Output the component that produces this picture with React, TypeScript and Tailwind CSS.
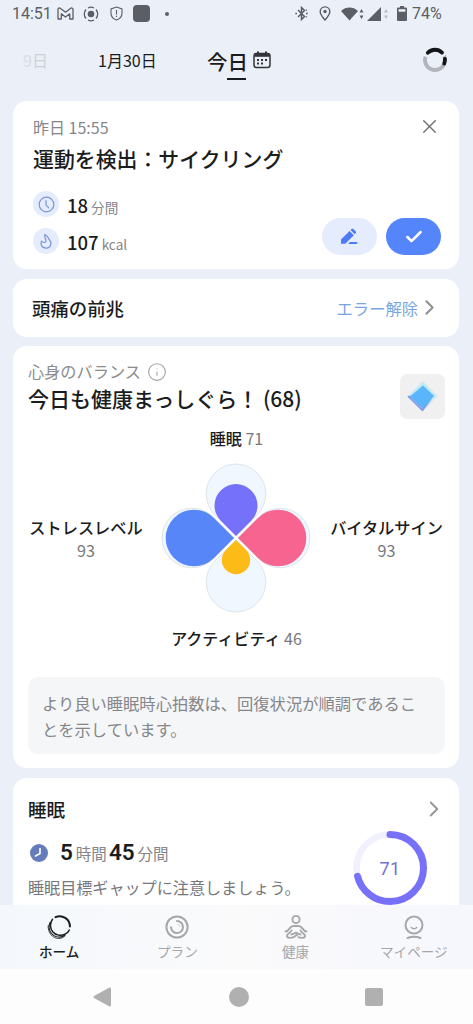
import type { ReactNode } from 'react';
import { Check, ChevronRight, Info, X } from 'lucide-react';

interface PetalProps {
    angle: number;
    radius: number;
    fill: string;
    stroke?: string;
}

interface NavItem {
    id: string;
    label: string;
    icon: ReactNode;
}

const petals: PetalProps[] = [
    { angle: 0, radius: 21.5, fill: '#7671fb' },
    { angle: 90, radius: 28.3, fill: '#f6648f' },
    { angle: 180, radius: 14.2, fill: '#fdbb17' },
    { angle: 270, radius: 28.3, fill: '#5786f9' },
];

function Petal({ angle, radius, fill, stroke }: PetalProps) {
    const a = radius * Math.SQRT1_2;
    return (
        <path
            d={`M0 -2 L${a} ${-a - 2} A${radius} ${radius} 0 1 0 ${-a} ${-a - 2} Z`}
            transform={`rotate(${angle})`}
            fill={fill}
            stroke={stroke}
        />
    );
}

function StatusBar() {
    return (
        <div className="flex h-[27px] shrink-0 items-center justify-between pl-3 pr-[30px] font-['Roboto'] text-[16px] text-[#5c5e66]">
            <div className="flex items-center">
                <span className="w-[41px]">14:51</span>
                <svg width="17" height="13" viewBox="0 0 17 13" className="ml-1" fill="none" stroke="currentColor" strokeWidth="1.3" strokeLinejoin="round">
                    <path d="M1 12V2.4C1 1 2.5.5 3.6 1.4L8.5 5.2l4.9-3.8C14.5.5 16 1 16 2.4V12h-3.3V6.8L8.5 10 4.3 6.8V12Z" />
                </svg>
                <svg width="16" height="16" viewBox="0 0 16 16" className="ml-[9px]" fill="none" stroke="currentColor" strokeWidth="1.3">
                    <circle cx="8" cy="8" r="3.3" fill="currentColor" stroke="none" />
                    <path d="M5 2a6.5 6.5 0 0 1 6 0M5 14a6.5 6.5 0 0 0 6 0M3 3.5a6.8 6.8 0 0 0 0 9M13 3.5a6.8 6.8 0 0 1 0 9" />
                </svg>
                <svg width="13" height="15" viewBox="0 0 13 15" className="ml-[11px]" fill="none" stroke="currentColor" strokeWidth="1.1">
                    <path d="M6.5 1 12 3v4.2c0 3.3-2.3 5.7-5.5 6.8C3.3 12.9 1 10.5 1 7.2V3ZM6.5 4v4.5M6.5 9.7v1.3" />
                </svg>
                <div className="ml-[10px] h-[17px] w-[17px] rounded-[4px] bg-[#5c5e66]" />
                <div className="ml-[15px] h-1 w-1 rounded-full bg-[#5c5e66]" />
            </div>
            <div className="flex items-center">
                <svg width="13" height="15" viewBox="0 0 13 15" fill="none" stroke="currentColor" strokeWidth="1.5">
                    <path d="m3 4 6.5 6.5-3 3v-12l3 3L3 11" />
                    <path d="M.3 7.5H2M11 7.5h1.7M11 4.5l.7-.7M11 10.5l.7.7" />
                </svg>
                <svg width="12" height="15" viewBox="0 0 12 15" className="ml-[11px]" fill="none" stroke="currentColor" strokeWidth="1.4">
                    <path d="M6 14C3 10.500 1.200 8 1.200 5.700a4.800 4.800 0 0 1 9.600 0C10.800 8 9 10.500 6 14Z" />
                    <circle cx="6" cy="5.500" r="1.700" fill="currentColor" stroke="none" />
                </svg>
                <svg width="23" height="14" viewBox="0 0 23 14" className="ml-[10px]" fill="currentColor">
                    <path d="M0 4C5-.6 12-.6 17 4L8.5 13.5ZM18.5 5.5 20.5 2l2 3.500ZM18.5 8.5l2 3.5 2-3.5Z" />
                </svg>
                <svg width="22" height="14" viewBox="0 0 22 14" className="ml-[3px]" fill="currentColor">
                    <path d="M0 14 14 0v14Z" />
                    <path d="m17 5.500 2-3.500 2 3.500ZM17 8.500l2 3.500 2-3.500Z" opacity=".35" />
                </svg>
                <svg width="10" height="15" viewBox="0 0 10 15" className="ml-2" fill="currentColor">
                    <path d="M3 0h4v1.500h2a1 1 0 0 1 1 1V14a1 1 0 0 1-1 1H1a1 1 0 0 1-1-1V2.500a1 1 0 0 1 1-1h2Z" />
                    <path d="M1.600 3.200h6.800v2.500H1.600Z" fill="#edf1f9" />
                </svg>
                <span className="ml-[5px] w-[31px]">74%</span>
            </div>
        </div>
    );
}

function DateHeader() {
    return (
        <header className="flex h-[74px] shrink-0 items-start pt-5 text-[#1b1c20]">
            <div className="flex w-[98px] pl-[23px] pt-[1px] text-[16px] leading-6 text-[#cdd0d8]">
                <span className="opacity-60">9</span>日
            </div>
            <span className="w-[109px] pt-[1px] text-[16px] leading-6">1月30日</span>
            <div className="flex flex-col items-center">
                <span className="text-[20.5px] font-medium leading-7">今日</span>
                <div className="mt-[3px] ml-[18px] h-[2px] w-[19px] bg-[#1b1c20]" />
            </div>
            <svg width="18" height="18" viewBox="0 0 18 18" className="ml-[5px] mt-1" fill="none" stroke="#333438" strokeWidth="1.5">
                <rect x="1" y="2.500" width="16" height="14" rx="2.500" />
                <path d="M1.500 4.300h15" strokeWidth="3" />
                <path d="M5 .5v3M13 .5v3" strokeWidth="2" />
                <path d="M4 9h2M8 9h2M12 9h2M4 12.500h2M8 12.500h2" strokeWidth="1.900" />
            </svg>
            <svg width="26" height="26" viewBox="0 0 26 26" className="ml-auto mr-[25px]" fill="none" strokeWidth="3.8" strokeLinecap="round">
                <circle cx="13" cy="13" r="10" stroke="#b2b5bb" />
                <path d="M4.500 7.500a10 10 0 0 1 16.500-.500" stroke="#edf1f9" strokeWidth="5" />
                <path d="M5.800 5.800a10 10 0 0 1 14.200-.200M22.900 11.800a10 10 0 0 1-.700 4.800" stroke="#141518" />
            </svg>
        </header>
    );
}

function WorkoutCard() {
    return (
        <section className="flex h-[168px] shrink-0 justify-between rounded-[14px] bg-white pl-5 pr-[18px] pt-3.5">
            <div>
                <p className="text-[16px] leading-6 text-[#85868a]">昨日 15:55</p>
                <h2 className="mt-[3px] text-[20.9px] font-medium leading-8 text-[#1b1c1e]">運動を検出：サイクリング</h2>
                <div className="mt-[17px] flex h-[26px] items-center">
                    <div className="flex h-[26px] w-[26px] items-center justify-center rounded-full bg-[#e4ecfd]">
                        <svg width="17" height="17" viewBox="0 0 17 17" fill="none" stroke="#7a96d8" strokeWidth="1.2" strokeLinecap="round">
                            <circle cx="8.5" cy="8.5" r="7.3" />
                            <path d="M8 4.5v4.3l2.7 3" />
                        </svg>
                    </div>
                    <p className="ml-2 pt-[3px] text-[#1b1c1e]">
                        <span className="text-[18.5px] font-medium">18</span>
                        <span className="ml-[3px] text-[13.6px] text-[#85868a]">分間</span>
                    </p>
                </div>
                <div className="mt-[11px] flex h-[26px] items-center">
                    <div className="flex h-[26px] w-[26px] items-center justify-center rounded-full bg-[#e4ecfd]">
                        <svg width="14" height="16" viewBox="0 0 14 16" fill="none" stroke="#7a96d8" strokeWidth="1.2" strokeLinejoin="round">
                            <path d="M5.800 1.500c3 1.300 3.300 3.600 4.400 5 1.300 1.500 2 2.700 1.700 4.300a5 5 0 0 1-9.900-.1c0-1.100.2-2 .7-2.700.7 1.100 1.500 1.600 2.500 1.500 1.500-.2 2.100-1.600 1.500-3.200-.6-1.700-1.600-2.500-.9-4.800Z" />
                        </svg>
                    </div>
                    <p className="ml-2 pt-[3px] text-[#1b1c1e]">
                        <span className="text-[18.5px] font-medium">107</span>
                        <span className="ml-[3px] text-[13.6px] text-[#85868a]">kcal</span>
                    </p>
                </div>
            </div>
            <div className="flex flex-col items-end justify-between pb-[14px]">
                <X size={23} strokeWidth={1.5} className="text-[#717276]" />
                <div className="flex gap-[9.5px]">
                    <button className="flex h-[37px] w-[55px] items-center justify-center rounded-full bg-[#e5ecfd]">
                        <svg width="18" height="17" viewBox="0 0 18 17" fill="#4d7bf3">
                            <path d="M1 15.800V11.500L9.600 3l4.200 4.200-8.500 8.600ZM10.500 2.100l1-1c.6-.6 1.300-.6 1.900 0l2.200 2.200c.6.600.6 1.300 0 1.900l-.9 1ZM10 14h6.500c1.300 0 1.300 1.900 0 1.900H8.200Z" />
                        </svg>
                    </button>
                    <button className="flex h-[37px] w-[55px] items-center justify-center rounded-full bg-[#5585fb] text-white">
                        <Check size={20} strokeWidth={3} />
                    </button>
                </div>
            </div>
        </section>
    );
}

function BalanceCard() {
    return (
        <section className="h-[422px] shrink-0 rounded-[14px] bg-white pl-[15px] pr-3.5 pt-[13px]">
            <div className="flex justify-between">
                <div>
                    <div className="flex items-center text-[16.2px] leading-6 text-[#8b8c90]">
                        心身のバランス
                        <Info size={20} strokeWidth={1.3} className="ml-1.5 mt-[1px] text-[#a0a1a4]" />
                    </div>
                    <h2 className="text-[21px] font-medium leading-[30px] text-[#1b1c1e]">今日も健康まっしぐら！ (68)</h2>
                </div>
                <div className="mt-[15px] flex h-[45px] w-[45px] items-center justify-center rounded-[7px] bg-[#f0f0f1]">
                    <svg width="33" height="33" viewBox="0 0 33 33">
                        <path d="M16.500 1.500c.8 0 1.300.4 1.800 1l12.200 12.200c.8.800.8 1.800 0 2.600L17 31 1.500 16.500 14.800 2.400c.5-.6 1-.9 1.700-.9Z" fill="#d8e8ef" />
                        <path d="m17 3 12.500 12.500L17 30 3 16Z" fill="#b5ecfb" />
                        <path d="M1.200 16.500 4 15.500 17 27l9-8-9.500 12.500Z" fill="#7f9be6" />
                        <path d="m17 5.500 11 10.500L17 28.500 4 16.500Z" fill="#5bb5fb" />
                        <path d="m4 17.500 12.500 11.300" stroke="#a9bdf5" strokeWidth=".8" />
                    </svg>
                </div>
            </div>

            <p className="mt-[7px] text-center text-[16px] leading-6 text-[#77787c]">
                <span className="font-medium text-[#1b1c1e]">睡眠</span> 71
            </p>
            <div className="mt-3 flex items-center justify-between text-center text-[16.2px] leading-[23px] text-[#77787c]">
                <p className="w-[116px] pt-[1px]">
                    <span className="whitespace-nowrap font-medium text-[#1b1c1e]">ストレスレベル</span>
                    <br />
                    93
                </p>
                <svg width="152" height="152" viewBox="-76 -76 152 152">
                    {petals.map((petal) => (
                        <Petal key={petal.angle} angle={petal.angle} radius={29.8} fill="#f0f7fe" stroke="#dde4ea" />
                    ))}
                    <path d="m-30-30 60 60M30-30l-60 60" stroke="#fff" strokeWidth="2" />
                    {petals.map((petal) => (
                        <Petal key={petal.angle} {...petal} />
                    ))}
                </svg>
                <p className="w-[117px] pt-[1px]">
                    <span className="whitespace-nowrap font-medium text-[#1b1c1e]">バイタルサイン</span>
                    <br />
                    93
                </p>
            </div>
            <p className="mt-[12px] text-center text-[16px] leading-6 text-[#77787c]">
                <span className="font-medium text-[#1b1c1e]">アクティビティ</span> 46
            </p>
            <div className="mt-[27px] h-[77px] rounded-[10px] bg-[#f5f6f8] py-3.5 pl-3.5 text-[16.3px] leading-[25.5px] text-[#85868a]">
                より良い睡眠時心拍数は、回復状況が順調であるこ
                <br />
                とを示しています。
            </div>
        </section>
    );
}

function SleepCard() {
    return (
        <section className="h-[160px] shrink-0 rounded-t-[14px] bg-white pl-[15px] pr-3 pt-[17px]">
            <div className="flex items-center justify-between">
                <h2 className="text-[18.5px] font-medium leading-7 text-[#1b1c1e]">睡眠</h2>
                <ChevronRight size={26} strokeWidth={1.8} className="text-[#96979a]" />
            </div>
            <div className="flex justify-between pr-5">
                <div>
                    <div className="mt-[14px] flex h-8 items-center">
                        <svg width="18" height="18" viewBox="0 0 18 18" className="ml-0.5">
                            <circle cx="9" cy="9" r="9" fill="#647cba" />
                            <path d="M10 4.500v5L5.500 12" fill="none" stroke="#fff" strokeWidth="1.600" strokeLinecap="round" strokeLinejoin="round" />
                        </svg>
                        <p className="ml-3 flex items-baseline pt-[1px] text-[15.5px] text-[#85868a]">
                            <span className="mr-[3px] font-['Roboto'] text-[22.5px] font-semibold text-[#1b1c1e]">5</span>
                            時間
                            <span className="ml-[2px] mr-[3px] font-['Roboto'] text-[22.5px] font-semibold text-[#1b1c1e]">45</span>
                            分間
                        </p>
                    </div>
                    <p className="mt-[6px] whitespace-nowrap text-[16.1px] leading-6 text-[#77787c]">睡眠目標ギャップに注意しましょう。</p>
                </div>
                <svg width="74" height="74" viewBox="0 0 74 74" className="mt-2">
                    <circle cx="37" cy="37" r="33.500" fill="none" stroke="#f0f1fd" strokeWidth="6.500" />
                    <circle
                        cx="37"
                        cy="37"
                        r="33.5"
                        fill="none"
                        stroke="#7770f8"
                        strokeWidth="7"
                        strokeLinecap="round"
                        strokeDasharray="71 29"
                        pathLength="100"
                        transform="rotate(-90 37 37)"
                    />
                    <text x="37" y="43.5" textAnchor="middle" fill="#746fd5" className="font-['Roboto'] text-[18px]" letterSpacing=".5">
                        71
                    </text>
                </svg>
            </div>
        </section>
    );
}

const navItems: NavItem[] = [
    {
        id: 'home',
        label: 'ホーム',
        icon: (
            <svg width="26" height="26" viewBox="0 0 26 26" fill="none" stroke="currentColor" strokeLinecap="round">
                <path d="M9.500 3.200a10.200 10.200 0 0 1 14.400 9.300" strokeWidth="2" />
                <path d="M6.500 5.200a10 10 0 0 0 12.500 15c2-1 3.500-2.200 4.300-4.200" strokeWidth="1.500" />
                <path d="M4 8.500C1.500 14.500 4.500 20.800 10.500 22.700c3.500.9 6.500 0 8.500-1.700" strokeWidth="1.100" />
                <path d="M2.200 11.500c-.8 7 4.300 13 10.500 13 2.500 0 4.500-1 6.300-2.600" strokeWidth=".8" />
            </svg>
        ),
    },
    {
        id: 'plan',
        label: 'プラン',
        icon: (
            <svg width="26" height="26" viewBox="0 0 26 26" fill="none" stroke="currentColor" strokeWidth="2" strokeLinecap="round">
                <circle cx="13" cy="13" r="10.600" />
                <path d="M13 7a6 6 0 1 1-6 6.300" />
                <path d="M13.500 10a3 3 0 0 1 2.500 3" strokeWidth="1" opacity=".4" />
            </svg>
        ),
    },
    {
        id: 'health',
        label: '健康',
        icon: (
            <svg width="26" height="26" viewBox="0 0 26 26" fill="none" stroke="currentColor" strokeWidth="1.9" strokeLinecap="round" strokeLinejoin="round">
                <circle cx="13" cy="5.500" r="3.600" />
                <path d="M2.500 17.500c4.500-.5 3.500-5.500 8-5.500h5c4.500 0 3.500 5 8 5.500" />
                <path d="M8.500 16.500c-.2 2.300-4.500 3-4.500 5.500 0 2.300 4.200 2.200 6.500 1.200 1.600-.8 2.300-2 4-2.500" />
                <path d="M8.500 20.500c2-.2 3-1.700 4.500-1.700s2.500 1.500 4.500 1.700M17.500 16.500c.2 2.300 4.500 3 4.500 5.500 0 2.300-4.200 2.200-6.500 1.200" />
            </svg>
        ),
    },
    {
        id: 'mypage',
        label: 'マイページ',
        icon: (
            <svg width="26" height="26" viewBox="0 0 26 26" fill="none" stroke="currentColor" strokeWidth="2" strokeLinecap="round">
                <circle cx="13" cy="11" r="8.500" />
                <path d="M10.300 13.500c1.500 1.500 3.900 1.500 5.400 0" strokeWidth="1.500" />
                <path d="M6.500 24c4-1.600 9-1.600 13 0" />
            </svg>
        ),
    },
];

function BottomNav() {
    return (
        <nav className="flex h-[64px] shrink-0 bg-linear-to-r from-[#f4f8fc] via-[#fafafb] to-[#f6f7fd]">
            {navItems.map((item) => (
                <button
                    key={item.id}
                    className={`flex flex-1 flex-col items-center pt-[9px] ${
                        item.id === 'home' ? 'font-medium text-[#1b1c1e]' : 'text-[#a6a7a9]'
                    }`}
                >
                    {item.icon}
                    <span className="mt-[1px] text-[13.6px] leading-5">{item.label}</span>
                </button>
            ))}
        </nav>
    );
}

function SystemBar() {
    return (
        <div className="flex h-[55px] shrink-0 items-start justify-between bg-[#fdfdfd] pl-[93px] pr-[90px] pt-[18px] text-[#b0b0b0]">
            <svg width="19" height="20" viewBox="0 0 19 20" fill="currentColor" stroke="currentColor" strokeWidth="2" strokeLinejoin="round">
                <path d="M1.500 10 17 1.500v17Z" />
            </svg>
            <div className="h-5 w-5 rounded-full bg-current" />
            <div className="mt-[1px] h-[18px] w-[18px] rounded-[2px] bg-current" />
        </div>
    );
}

export default function App() {
    return (
        <div className="flex h-[1024px] w-[473px] flex-col overflow-hidden bg-[#ebf0f8] font-['Noto_Sans_CJK_JP',sans-serif]">
            <StatusBar />
            <DateHeader />
            <main className="flex min-h-0 flex-1 flex-col gap-[9.5px] overflow-hidden pl-[13px] pr-3.5">
                <WorkoutCard />
                <section className="flex h-[58px] shrink-0 items-center rounded-[14px] bg-white pl-[19px] pr-[17px] pt-0.5">
                    <h2 className="text-[18.4px] font-medium text-[#1b1c1e]">頭痛の前兆</h2>
                    <span className="ml-auto mr-[-1px] text-[16.3px] text-[#78a6df]">エラー解除</span>
                    <ChevronRight size={25} strokeWidth={1.8} className="mb-0.5 text-[#8c8d90]" />
                </section>
                <BalanceCard />
                <SleepCard />
            </main>
            <BottomNav />
            <SystemBar />
        </div>
    );
}
